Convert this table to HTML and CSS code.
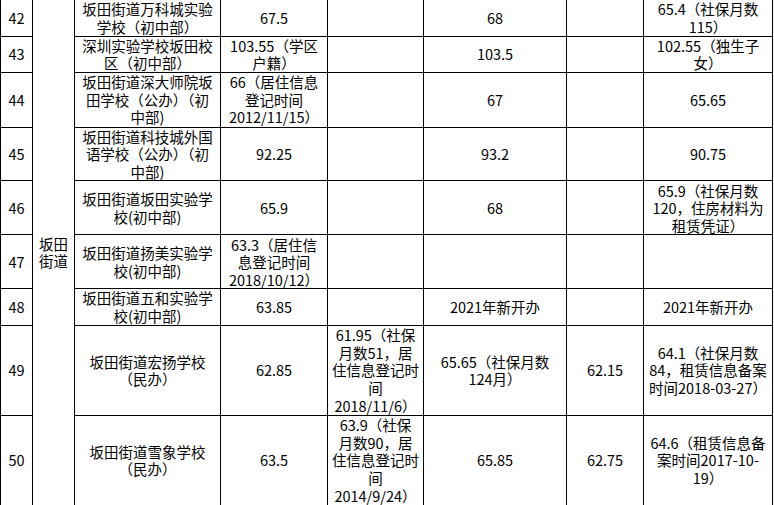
FILE: index.html
```html
<!DOCTYPE html>
<html lang="zh">
<head>
<meta charset="utf-8">
<link rel="stylesheet" href="styles.css">
</head>
<body>
<table class="t">
<colgroup>
<col class="c1"><col class="c2"><col class="c3"><col class="c4"><col class="c5"><col class="c6"><col class="c7"><col class="c8">
</colgroup>
<tbody>
<tr class="r36 first">
<td>42</td>
<td rowspan="9">坂田<br>街道</td>
<td>坂田街道万科城实验<br>学校（初中部）</td>
<td>67.5</td>
<td></td>
<td>68</td>
<td></td>
<td>65.4（社保月数<br>115）</td>
</tr>
<tr class="r36">
<td>43</td>
<td>深圳实验学校坂田校<br>区（初中部）</td>
<td>103.55（学区<br>户籍）</td>
<td></td>
<td>103.5</td>
<td></td>
<td>102.55（独生子<br>女）</td>
</tr>
<tr class="r55">
<td>44</td>
<td>坂田街道深大师院坂<br>田学校（公办）（初<br>中部)</td>
<td>66（居住信息<br>登记时间<br>2012/11/15）</td>
<td></td>
<td>67</td>
<td></td>
<td>65.65</td>
</tr>
<tr class="r53">
<td>45</td>
<td>坂田街道科技城外国<br>语学校（公办）（初<br>中部)</td>
<td>92.25</td>
<td></td>
<td>93.2</td>
<td></td>
<td>90.75</td>
</tr>
<tr class="r54">
<td>46</td>
<td>坂田街道坂田实验学<br>校(初中部)</td>
<td>65.9</td>
<td></td>
<td>68</td>
<td></td>
<td>65.9（社保月数<br>120，住房材料为<br>租赁凭证）</td>
</tr>
<tr class="r54">
<td>47</td>
<td>坂田街道扬美实验学<br>校(初中部)</td>
<td>63.3（居住信<br>息登记时间<br>2018/10/12）</td>
<td></td>
<td></td>
<td></td>
<td></td>
</tr>
<tr class="r36">
<td>48</td>
<td>坂田街道五和实验学<br>校(初中部)</td>
<td>63.85</td>
<td></td>
<td>2021年新开办</td>
<td></td>
<td>2021年新开办</td>
</tr>
<tr class="r90">
<td>49</td>
<td>坂田街道宏扬学校<br>（民办）</td>
<td>62.85</td>
<td>61.95（社保<br>月数51，居<br>住信息登记时<br>间<br>2018/11/6）</td>
<td>65.65（社保月数<br>124月）</td>
<td>62.15</td>
<td>64.1（社保月数<br>84，租赁信息备案<br>时间2018-03-27）</td>
</tr>
<tr class="r90">
<td>50</td>
<td>坂田街道雪象学校<br>（民办）</td>
<td>63.5</td>
<td>63.9（社保<br>月数90，居<br>住信息登记时<br>间<br>2014/9/24）</td>
<td>65.85</td>
<td>62.75</td>
<td>64.6（租赁信息备<br>案时间2017-10-<br>19）</td>
</tr>
</tbody>
</table>
</body>
</html>
```
FILE: styles.css
```css
html, body {
  margin: 0;
  padding: 0;
  background: #ffffff;
}
.t {
  border-collapse: collapse;
  table-layout: fixed;
  width: 772px;
  font-family: "Noto Sans CJK SC", "Noto Sans", sans-serif;
  font-size: 14.5px;
  line-height: 17.6px;
  color: #000000;
}
.c1 { width: 32px; }
.c2 { width: 42px; }
.c3 { width: 146px; }
.c4 { width: 107px; }
.c5 { width: 96px; }
.c6 { width: 143px; }
.c7 { width: 77px; }
.c8 { width: 129px; }
.t td {
  border: 1px solid #000000;
  padding: 0;
  text-align: center;
  vertical-align: middle;
  white-space: nowrap;
  overflow: visible;
}
.first td {
  border-top: none;
}
.r36 { height: 36px; }
.r53 { height: 53px; }
.r54 { height: 54px; }
.r55 { height: 55px; }
.r90 { height: 90px; }
```
